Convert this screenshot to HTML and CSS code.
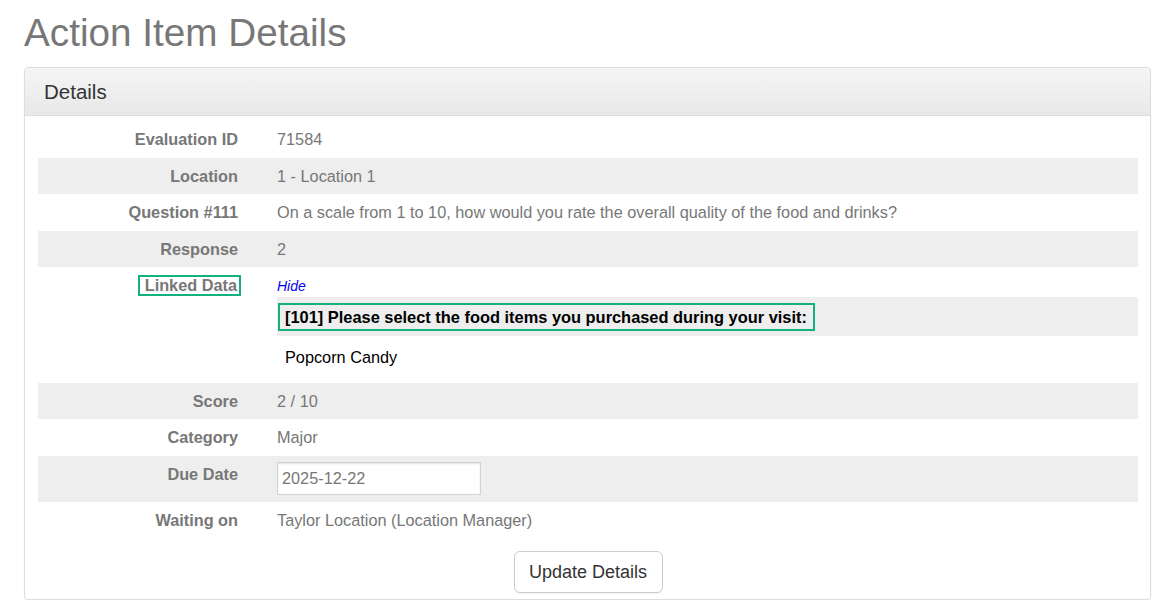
FILE: index.html
```html
<!DOCTYPE html>
<html>
<head>
<meta charset="utf-8">
<title>Action Item Details</title>
<link rel="stylesheet" href="styles.css">
</head>
<body>
<h1 class="page-title">Action Item Details</h1>
<div class="panel">
  <div class="panel-heading">Details</div>
  <div class="panel-body">
    <div class="row">
      <div class="label">Evaluation ID</div>
      <div class="value">71584</div>
    </div>
    <div class="row alt">
      <div class="label">Location</div>
      <div class="value">1 - Location 1</div>
    </div>
    <div class="row">
      <div class="label">Question #111</div>
      <div class="value">On a scale from 1 to 10, how would you rate the overall quality of the food and drinks?</div>
    </div>
    <div class="row alt">
      <div class="label">Response</div>
      <div class="value">2</div>
    </div>
    <div class="row">
      <div class="label"><span class="marked">Linked Data</span></div>
      <div class="value linked">
        <a class="hide-link" href="#">Hide</a>
        <div class="linked-question"><span class="question-box">[101] Please select the food items you purchased during your visit:</span></div>
        <div class="linked-answer">Popcorn Candy</div>
      </div>
    </div>
    <div class="row alt">
      <div class="label">Score</div>
      <div class="value">2 / 10</div>
    </div>
    <div class="row">
      <div class="label">Category</div>
      <div class="value">Major</div>
    </div>
    <div class="row alt">
      <div class="label">Due Date</div>
      <div class="value input-cell"><input class="date-input" type="text" value="2025-12-22"></div>
    </div>
    <div class="row">
      <div class="label">Waiting on</div>
      <div class="value">Taylor Location (Location Manager)</div>
    </div>
    <div class="actions">
      <button class="btn" type="button">Update Details</button>
    </div>
  </div>
</div>
</body>
</html>
```
FILE: styles.css
```css
html, body {
  margin: 0;
  padding: 0;
  background: #fff;
}
body {
  padding: 0 15px 0 24px;
  font-family: "Liberation Sans", Arial, sans-serif;
  font-size: 16.3px;
  color: #777;
}
.page-title {
  margin: 11px 0 13px;
  font-size: 38.7px;
  line-height: 43px;
  font-weight: normal;
  color: #777;
}
.panel {
  border: 1px solid #ddd;
  border-radius: 4px;
  box-shadow: 0 1px 2px rgba(0,0,0,0.06);
  background: #fff;
}
.panel-heading {
  height: 48px;
  box-sizing: border-box;
  padding: 12px 19px 0;
  font-size: 20.5px;
  line-height: 24px;
  color: #333;
  background: linear-gradient(#f5f5f5, #e8e8e8);
  border-bottom: 1px solid #ddd;
  border-radius: 3px 3px 0 0;
}
.panel-body {
  padding: 5px 12px 6px 13px;
}
.row {
  display: flex;
  align-items: flex-start;
}
.row.alt {
  background: #eee;
}
.label {
  width: 200px;
  flex: none;
  text-align: right;
  font-weight: bold;
  line-height: 20.5px;
  padding: 8px 0;
}
.value {
  flex: 1;
  margin-left: 39px;
  line-height: 20.5px;
  padding: 8px 0;
}
.marked {
  display: inline-block;
  border: 2px solid #14b07f;
  padding: 0 2px 0 5px;
  margin-right: -3px;
  line-height: 17px;
}
.value.linked {
  padding: 0;
}
.hide-link {
  display: block;
  font-size: 14px;
  font-style: italic;
  color: #0000ee;
  text-decoration: none;
  line-height: 20px;
  padding-top: 9px;
  height: 21px;
}
.linked-question {
  background: #eee;
  padding: 6px 0 5px 1px;
}
.question-box {
  display: inline-block;
  border: 2px solid #14b07f;
  padding: 0 6px 0 5px;
  font-weight: bold;
  font-size: 16.4px;
  color: #000;
  line-height: 24px;
}
.linked-answer {
  color: #000;
  padding: 11px 8px 15px;
}
.value.input-cell {
  padding: 6px 0 7px;
}
.date-input {
  display: block;
  width: 204px;
  height: 33px;
  box-sizing: border-box;
  border: 1px solid #c9d6d1;
  padding: 0 4px;
  font-family: "Liberation Sans", Arial, sans-serif;
  font-size: 16.3px;
  color: #777;
  box-shadow: inset 0 1px 2px rgba(0,0,0,0.12);
  background: #fff;
  margin: 0;
}
.actions {
  display: flex;
  justify-content: center;
  padding-top: 13px;
}
.btn {
  width: 149px;
  height: 42px;
  border: 1px solid #ccc;
  border-radius: 6px;
  background: #fff;
  color: #333;
  font-family: "Liberation Sans", Arial, sans-serif;
  font-size: 18px;
  padding: 0;
  box-shadow: 0 1px 1px rgba(0,0,0,0.05);
}
```
